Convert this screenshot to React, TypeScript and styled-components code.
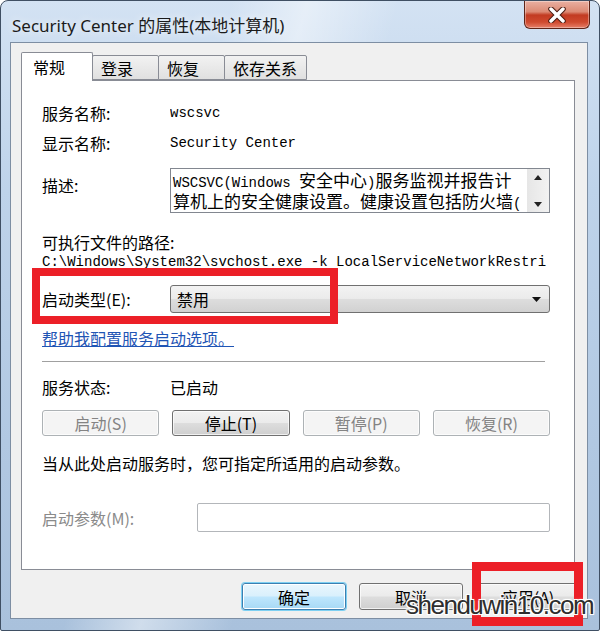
import styled, { createGlobalStyle } from "styled-components";

const GlobalStyle = createGlobalStyle`
  html, body {
    margin: 0;
    padding: 0;
  }
  body {
    width: 600px;
    height: 631px;
    overflow: hidden;
    background: #fff;
    font-family: "Noto Sans CJK SC", sans-serif;
  }
`;

const Window = styled.div`
  position: relative;
  box-sizing: border-box;
  width: 600px;
  height: 631px;
  display: flex;
  flex-direction: column;
  padding: 0 11px 11px 9px;
  border: 1px solid #3f4f63;
  border-radius: 8px 8px 2px 2px;
  background:
    linear-gradient(105deg, rgba(255, 255, 255, 0) 0 30%, rgba(255, 255, 255, 0.45) 40%, rgba(255, 255, 255, 0) 52%),
    linear-gradient(180deg, #d3e2f3 0%, #bed3ea 30%, #b1c8e2 70%, #a9c1dc 100%);
`;

const TitleBar = styled.div`
  height: 41px;
  display: flex;
  align-items: flex-start;
`;

const Title = styled.div`
  padding: 14px 0 0 2px;
  font: 17px/22px "Noto Sans", "Noto Sans CJK SC", sans-serif;
  color: #1b1b1b;
  text-shadow: 0 0 8px rgba(255, 255, 255, 0.95);
`;

const CloseButton = styled.div`
  margin-left: auto;
  margin-right: -2px;
  box-sizing: border-box;
  width: 66px;
  height: 28px;
  display: flex;
  align-items: center;
  justify-content: center;
  border: 1px solid #5e2418;
  border-top: none;
  border-radius: 0 0 6px 6px;
  background: linear-gradient(180deg, #eab0a2 0%, #dc8a74 40%, #c23b22 52%, #cf4a2f 78%, #e6806a 100%);
  box-shadow: inset 0 0 0 1px rgba(255, 255, 255, 0.35);
`;

const ClientArea = styled.div`
  flex: 1;
  display: flex;
  flex-direction: column;
  padding: 9px 7px 0 10px;
  background: #f0f0f0;
  border: 1px solid #7d8ea3;
`;

const TabRow = styled.div`
  position: relative;
  z-index: 1;
  display: flex;
  align-items: flex-end;
  height: 29px;
  margin-bottom: -1px;
`;

const Tab = styled.div<{ $active?: boolean }>`
  box-sizing: border-box;
  display: flex;
  align-items: center;
  min-width: ${(p) => (p.$active ? "72px" : "67px")};
  height: ${(p) => (p.$active ? "29px" : "25px")};
  margin-bottom: ${(p) => (p.$active ? "0" : "1px")};
  margin-left: ${(p) => (p.$active ? "0" : "-1px")};
  padding: 0 9px 0 ${(p) => (p.$active ? "11px" : "8px")};
  border: 1px solid #898c95;
  border-bottom: ${(p) => (p.$active ? "none" : "1px solid #898c95")};
  border-radius: 2px 2px 0 0;
  background: ${(p) => (p.$active ? "#fff" : "linear-gradient(180deg, #f2f2f2, #e0e0e0)")};
  font-size: 16px;
  line-height: 20px;
  color: #000;
`;

const Panel = styled.div`
  box-sizing: border-box;
  height: 490px;
  margin-right: 5px;
  padding: 22px 24px 0 20px;
  background: #fff;
  border: 1px solid #898c95;
`;

const Row = styled.div<{ $gap?: number; $label?: number }>`
  display: grid;
  grid-template-columns: ${(p) => p.$label ?? 128}px 1fr;
  align-items: center;
  margin-top: ${(p) => p.$gap ?? 0}px;
`;

const Label = styled.div<{ $top?: number; $dim?: boolean }>`
  align-self: ${(p) => (p.$top !== undefined ? "start" : "center")};
  padding-top: ${(p) => p.$top ?? 0}px;
  font-size: 16px;
  line-height: 20px;
  color: ${(p) => (p.$dim ? "#8a8a8a" : "#000")};
`;

const Text = styled.div<{ $gap?: number }>`
  margin-top: ${(p) => p.$gap ?? 0}px;
  font-size: 16px;
  line-height: 20px;
  color: #000;
  white-space: nowrap;
`;

const Mono = styled.div`
  font: 14px/20px "Liberation Mono", "Noto Sans CJK SC", monospace;
  color: #000;
  white-space: nowrap;
  overflow: hidden;
`;

const DescBox = styled.div`
  box-sizing: border-box;
  height: 45px;
  display: flex;
  border: 1px solid #828790;
  background: #fff;
`;

const DescText = styled.div`
  flex: 1;
  min-width: 0;
  overflow: hidden;
  padding: 2px 0 0 2px;
  font-size: 17px;
  line-height: 17px;
  white-space: nowrap;
  color: #000;
`;

const Latin = styled.span`
  font: 14px/17px "Liberation Mono", monospace;
`;

const ScrollBar = styled.div`
  width: 22px;
  display: flex;
  flex-direction: column;
  align-items: center;
  justify-content: space-between;
  padding: 6px 0 5px;
  background: linear-gradient(90deg, #e6e6e6, #f2f2f2);
`;

const Combo = styled.div`
  box-sizing: border-box;
  height: 28px;
  display: flex;
  align-items: center;
  justify-content: space-between;
  padding: 0 8px 0 6px;
  border: 1px solid #707070;
  border-radius: 3px;
  background: linear-gradient(180deg, #f3f3f3 0%, #ebebeb 48%, #dddddd 52%, #d1d1d1 100%);
  font-size: 16px;
  color: #000;
`;

const Link = styled.a`
  display: block;
  margin-top: 15px;
  font-size: 16px;
  line-height: 20px;
  color: #1f55b5;
  text-decoration: underline;
`;

const Separator = styled.div`
  margin: 13px 5px 0 0;
  border-top: 1px solid #a0a0a0;
  border-bottom: 1px solid #fff;
`;

const ButtonGrid = styled.div`
  display: grid;
  grid-template-columns: repeat(4, 1fr);
  gap: 13px;
  margin-top: 13px;
`;

const Button = styled.div<{ $disabled?: boolean; $primary?: boolean; $w?: number; $h?: number }>`
  box-sizing: border-box;
  width: ${(p) => (p.$w ? `${p.$w}px` : "auto")};
  height: ${(p) => p.$h ?? 26}px;
  display: flex;
  align-items: center;
  justify-content: center;
  border-radius: 3px;
  border: 1px solid ${(p) => (p.$disabled ? "#adb2b5" : p.$primary ? "#3c7fb1" : "#707070")};
  background: ${(p) =>
    p.$disabled
      ? "#f4f4f4"
      : p.$primary
        ? "linear-gradient(180deg, #eaf6fd 0%, #d9f0fc 48%, #bee6fd 52%, #a7d9f5 100%)"
        : "linear-gradient(180deg, #f2f2f2 0%, #ebebeb 48%, #dddddd 52%, #cfcfcf 100%)"};
  box-shadow: ${(p) => (p.$primary ? "0 0 0 1px #7ed0f2, inset 0 0 0 1px #fff" : "inset 0 0 0 1px rgba(255,255,255,0.7)")};
  font-size: 16px;
  color: ${(p) => (p.$disabled ? "#838383" : "#000")};
`;

const ParamInput = styled.div`
  box-sizing: border-box;
  height: 29px;
  border: 1px solid #b3b6ba;
  border-radius: 2px;
  background: #fff;
`;

const Footer = styled.div`
  display: flex;
  justify-content: flex-end;
  gap: 13px;
  padding-top: 13px;
`;

const Annotation = styled.div<{ $x: number; $y: number; $w: number; $h: number; $t: number }>`
  position: absolute;
  left: ${(p) => p.$x}px;
  top: ${(p) => p.$y}px;
  width: ${(p) => p.$w}px;
  height: ${(p) => p.$h}px;
  box-sizing: border-box;
  border: ${(p) => p.$t}px solid #ec1f27;
  pointer-events: none;
`;

const Watermark = styled.div`
  position: absolute;
  left: 405px;
  top: 590px;
  font: 26px/28px "Liberation Sans", sans-serif;
  letter-spacing: -1.5px;
  color: #2e2e2e;
  text-shadow:
    1px 1px 0 #fff, -1px -1px 0 #fff, 1px -1px 0 #fff, -1px 1px 0 #fff,
    0 0 3px rgba(255, 255, 255, 0.9);
`;

const Arrow = ({ up = false }: { up?: boolean }) => (
  <svg width="8" height="5" viewBox="0 0 8 5">
    <path d={up ? "M0 5 L4 0 L8 5 Z" : "M0 0 L8 0 L4 5 Z"} fill="#222" />
  </svg>
);

const App = () => {
  return (
    <>
      <GlobalStyle />
      <Window>
        <TitleBar>
          <Title>Security Center 的属性(本地计算机)</Title>
          <CloseButton>
            <svg width="20" height="16" viewBox="0 0 20 16">
              <path d="M4 2 L16 14 M16 2 L4 14" stroke="#4a1a10" strokeWidth="5.5" strokeLinecap="round" />
              <path d="M4 2 L16 14 M16 2 L4 14" stroke="#fff" strokeWidth="3.5" strokeLinecap="round" />
            </svg>
          </CloseButton>
        </TitleBar>

        <ClientArea>
          <TabRow>
            <Tab $active>常规</Tab>
            <Tab>登录</Tab>
            <Tab>恢复</Tab>
            <Tab>依存关系</Tab>
          </TabRow>

          <Panel>
            <Row>
              <Label>服务名称:</Label>
              <Mono>wscsvc</Mono>
            </Row>
            <Row $gap={10}>
              <Label>显示名称:</Label>
              <Mono>Security Center</Mono>
            </Row>
            <Row $gap={15}>
              <Label $top={7}>描述:</Label>
              <DescBox>
                <DescText>
                  <div>
                    <Latin>WSCSVC(Windows </Latin>安全中心<Latin>)</Latin>服务监视并报告计
                  </div>
                  <div>
                    算机上的安全健康设置。健康设置包括防火墙<Latin>(</Latin>
                  </div>
                </DescText>
                <ScrollBar>
                  <Arrow up />
                  <Arrow />
                </ScrollBar>
              </DescBox>
            </Row>

            <Text $gap={19}>可执行文件的路径:</Text>
            <Mono>C:\Windows\System32\svchost.exe -k LocalServiceNetworkRestri</Mono>

            <Row $gap={13}>
              <Label>启动类型(E):</Label>
              <Combo>
                <span>禁用</span>
                <svg width="9" height="5" viewBox="0 0 9 5">
                  <path d="M0 0 L9 0 L4.5 5 Z" fill="#111" />
                </svg>
              </Combo>
            </Row>

            <Link>帮助我配置服务启动选项。</Link>
            <Separator />

            <Row $gap={14}>
              <Label>服务状态:</Label>
              <Text>已启动</Text>
            </Row>

            <ButtonGrid>
              <Button $disabled>启动(S)</Button>
              <Button>停止(T)</Button>
              <Button $disabled>暂停(P)</Button>
              <Button $disabled>恢复(R)</Button>
            </ButtonGrid>

            <Text $gap={17}>当从此处启动服务时，您可指定所适用的启动参数。</Text>

            <Row $gap={30} $label={155}>
              <Label $dim>启动参数(M):</Label>
              <ParamInput />
            </Row>
          </Panel>

          <Footer>
            <Button $primary $w={104} $h={27}>确定</Button>
            <Button $w={104} $h={27}>取消</Button>
            <Button $w={104} $h={27}>应用(A)</Button>
          </Footer>
        </ClientArea>

        <Annotation $x={31} $y={267} $w={306} $h={56} $t={8} />
        <Annotation $x={471} $y={561} $w={111} $h={64} $t={9} />
        <Watermark>shenduwin10.com</Watermark>
      </Window>
    </>
  );
};

export default App;
